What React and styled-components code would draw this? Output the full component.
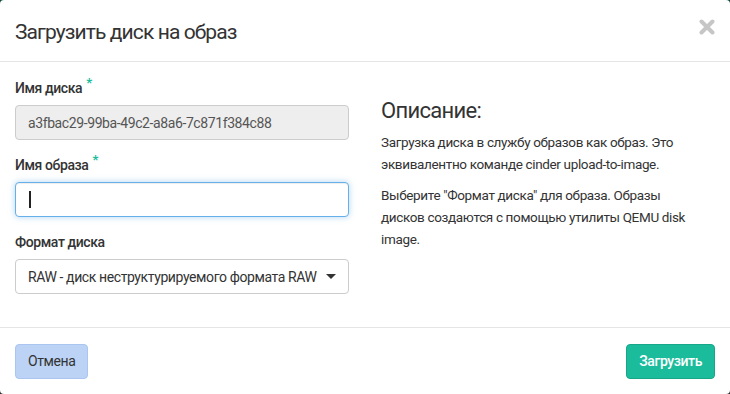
import styled, { createGlobalStyle } from 'styled-components'

const Global = createGlobalStyle`
  html, body {
    margin: 0;
    padding: 0;
  }
  body {
    background: linear-gradient(#0b4a3c, #2e2e2e);
    font-family: Roboto, "Noto Sans", sans-serif;
    color: #333;
  }
`

const Modal = styled.div`
  width: 730px;
  height: 394px;
  background: #fff;
  border-radius: 4px;
  display: flex;
  flex-direction: column;
  box-sizing: border-box;
`

const Header = styled.div`
  height: 62px;
  border-bottom: 1px solid #e5e5e5;
  display: flex;
  align-items: center;
  justify-content: space-between;
  padding: 0 15px;
  box-sizing: border-box;
`

const Title = styled.h4`
  margin: 0;
  font-size: 21px;
  font-weight: 400;
  letter-spacing: -0.9px;
  color: #333;
  padding-top: 2px;
`

const Close = styled.svg`
  width: 16px;
  height: 16px;
  margin-top: -8px;
`

const Body = styled.div`
  flex: 1;
  display: grid;
  grid-template-columns: 334px 1fr;
  column-gap: 32px;
  padding: 16px 15px 0;
  border-bottom: 1px solid #e5e5e5;
`

const Form = styled.div`
  display: flex;
  flex-direction: column;
`

const Group = styled.div`
  display: flex;
  flex-direction: column;
  margin-bottom: 15px;
`

const Label = styled.label`
  font-size: 14px;
  font-weight: 500;
  letter-spacing: -0.4px;
  color: #333;
  margin-bottom: 7px;
  height: 20px;
  line-height: 20px;
`

const Req = styled.span`
  color: #1abc9c;
  font-size: 13px;
  font-weight: 700;
  margin-left: 4px;
  position: relative;
  top: -6px;
  line-height: 0;
`

const Field = styled.div`
  height: 35px;
  box-sizing: border-box;
  border: 1px solid ${(p) => (p.focus ? '#66afe9' : '#ccc')};
  box-shadow: ${(p) =>
    p.focus ? 'inset 0 1px 1px rgba(0,0,0,.075), 0 0 6px rgba(102,175,233,.5)' : 'none'};
  background: ${(p) => (p.disabled ? '#eee' : '#fff')};
  border-radius: 4px;
  padding: 0 12px;
  display: flex;
  align-items: center;
  justify-content: space-between;
  font-size: 14px;
  letter-spacing: -0.4px;
  color: ${(p) => (p.disabled ? '#555' : '#333')};
`

const Caret = styled.span`
  width: 2px;
  height: 17px;
  background: #222;
  margin-left: 1px;
`

const Arrow = styled.span`
  width: 0;
  height: 0;
  border-left: 5px solid transparent;
  border-right: 5px solid transparent;
  border-top: 5px solid #333;
`

const Side = styled.div`
  padding-top: 20px;
  padding-right: 18px;
`

const SideTitle = styled.h3`
  margin: 0 0 8px;
  font-size: 22px;
  font-weight: 400;
  letter-spacing: -0.7px;
  color: #333;
`

const Para = styled.p`
  margin: 0 0 9px;
  font-size: 13.5px;
  line-height: 22px;
  letter-spacing: -0.35px;
  color: #333;
`

const Footer = styled.div`
  height: 66px;
  display: flex;
  align-items: center;
  justify-content: space-between;
  padding: 0 15px;
`

const Button = styled.button`
  height: 35px;
  padding: 0 12px;
  border-radius: 4px;
  font-family: Roboto, sans-serif;
  font-size: 14px;
  letter-spacing: -0.4px;
  border: 1px solid ${(p) => (p.primary ? '#18a689' : '#a9c5f0')};
  background: ${(p) => (p.primary ? '#1abc9c' : '#bcd3f5')};
  color: ${(p) => (p.primary ? '#fff' : '#333')};
  font-weight: ${(p) => (p.primary ? 500 : 400)};
`

export default function App() {
  return (
    <>
      <Global />
      <Modal>
        <Header>
          <Title>Загрузить диск на образ</Title>
          <Close viewBox="0 0 16 16">
            <path d="M2.5 2.5 L13.5 13.5 M13.5 2.5 L2.5 13.5" stroke="#c6c6c6" strokeWidth="4" strokeLinecap="round" />
          </Close>
        </Header>
        <Body>
          <Form>
            <Group>
              <Label>
                Имя диска<Req>*</Req>
              </Label>
              <Field disabled>a3fbac29-99ba-49c2-a8a6-7c871f384c88</Field>
            </Group>
            <Group>
              <Label>
                Имя образа<Req>*</Req>
              </Label>
              <Field focus>
                <Caret />
              </Field>
            </Group>
            <Group>
              <Label>Формат диска</Label>
              <Field>
                RAW - диск неструктурируемого формата RAW
                <Arrow />
              </Field>
            </Group>
          </Form>
          <Side>
            <SideTitle>Описание:</SideTitle>
            <Para>
              Загрузка диска в службу образов как образ. Это эквивалентно команде cinder
              upload-to-image.
            </Para>
            <Para>
              Выберите "Формат диска" для образа. Образы дисков создаются с помощью утилиты
              QEMU disk image.
            </Para>
          </Side>
        </Body>
        <Footer>
          <Button>Отмена</Button>
          <Button primary>Загрузить</Button>
        </Footer>
      </Modal>
    </>
  )
}
